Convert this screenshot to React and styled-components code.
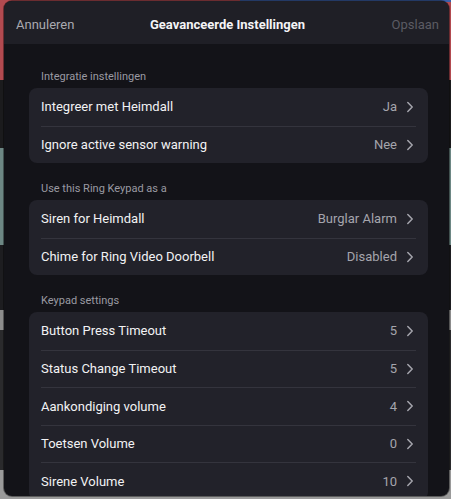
import React from "react";
import styled, { createGlobalStyle } from "styled-components";

const GlobalStyle = createGlobalStyle`
  html, body {
    margin: 0;
    padding: 0;
    height: 100%;
  }
  body {
    font-family: Roboto, "Noto Sans", "Liberation Sans", sans-serif;
    background:
      linear-gradient(to right, transparent 0, transparent 240px, #3b5fa8 240px) top / 100% 2px no-repeat,
      linear-gradient(to bottom,
        #b24a50 0px, #b24a50 80px,
        #1b1b1d 80px, #1b1b1d 148px,
        #6d8784 148px, #6d8784 245px,
        #1d1d20 245px, #1d1d20 310px,
        #8c8c8c 310px, #8c8c8c 330px,
        #2a2a2c 330px, #2a2a2c 470px,
        #9a9a9a 470px);
    overflow: hidden;
  }
`;

const sections = [
  {
    title: "Integratie instellingen",
    rows: [
      { label: "Integreer met Heimdall", value: "Ja" },
      { label: "Ignore active sensor warning", value: "Nee" },
    ],
  },
  {
    title: "Use this Ring Keypad as a",
    rows: [
      { label: "Siren for Heimdall", value: "Burglar Alarm" },
      { label: "Chime for Ring Video Doorbell", value: "Disabled" },
    ],
  },
  {
    title: "Keypad settings",
    rows: [
      { label: "Button Press Timeout", value: "5" },
      { label: "Status Change Timeout", value: "5" },
      { label: "Aankondiging volume", value: "4" },
      { label: "Toetsen Volume", value: "0" },
      { label: "Sirene Volume", value: "10" },
    ],
  },
];

function Chevron() {
  return (
    <svg width="8" height="12" viewBox="0 0 8 12" fill="none">
      <path
        d="M1.8 1.5L6.2 6L1.8 10.5"
        stroke="#a3a3ab"
        strokeWidth="1.5"
        strokeLinecap="round"
        strokeLinejoin="round"
      />
    </svg>
  );
}

function App() {
  return (
    <>
      <GlobalStyle />
      <Modal>
        <Header>
          <HeadButton>Annuleren</HeadButton>
          <Title>Geavanceerde Instellingen</Title>
          <HeadButton $right $disabled>
            Opslaan
          </HeadButton>
        </Header>
        <Body>
          {sections.map((section) => (
            <Section key={section.title}>
              <SectionTitle>{section.title}</SectionTitle>
              <Card>
                {section.rows.map((row) => (
                  <Row key={row.label}>
                    <Label>{row.label}</Label>
                    <Value>{row.value}</Value>
                    <Chevron />
                  </Row>
                ))}
              </Card>
            </Section>
          ))}
        </Body>
      </Modal>
    </>
  );
}

const Modal = styled.div`
  margin: 1px 2px 0 4px;
  height: 495px;
  border-radius: 8px;
  overflow: hidden;
  background-color: #131318;
  box-shadow: 0 0 0 1px rgba(0, 0, 0, 0.4);
  display: flex;
  flex-direction: column;
`;

const Header = styled.div`
  height: 43px;
  flex-shrink: 0;
  display: grid;
  grid-template-columns: 1fr auto 1fr;
  align-items: center;
  padding: 3px 10px 0 12px;
  box-sizing: border-box;
  background-color: #1f1f26;
`;

const HeadButton = styled.div`
  font-size: 13px;
  color: ${(p) => (p.$disabled ? "#5b5b63" : "#a9a9b0")};
  text-align: ${(p) => (p.$right ? "right" : "left")};
`;

const Title = styled.div`
  font-size: 13px;
  font-weight: 700;
  color: #f4f4f6;
`;

const Body = styled.div`
  padding: 25px 21px 0 25px;
  display: flex;
  flex-direction: column;
  gap: 18px;
`;

const Section = styled.div`
  display: flex;
  flex-direction: column;
`;

const SectionTitle = styled.div`
  font-size: 11px;
  color: #9a9aa2;
  padding: 0 12px 3px;
  line-height: 16px;
`;

const Card = styled.div`
  background-color: #22222a;
  border-radius: 8px;
  padding: 0 12px;
`;

const Row = styled.div`
  height: 37.5px;
  display: flex;
  align-items: center;
  gap: 9px;
  padding-right: 2px;
  box-sizing: border-box;
  & + & {
    border-top: 1px solid #34343d;
  }
`;

const Label = styled.div`
  flex: 1;
  font-size: 13px;
  color: #f2f2f4;
`;

const Value = styled.div`
  font-size: 13px;
  color: #a5a5ad;
`;

export default App;
